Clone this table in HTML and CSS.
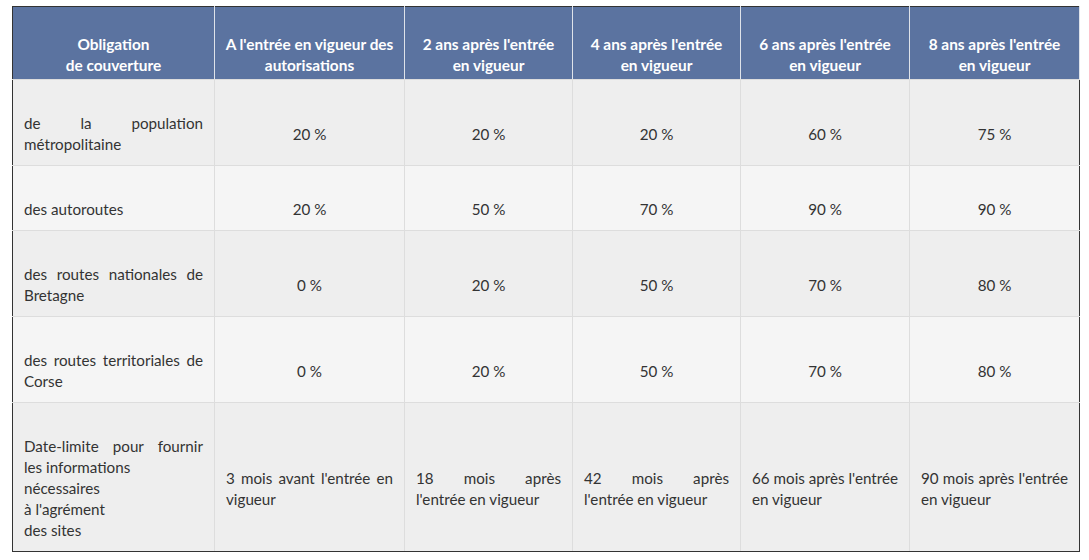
FILE: index.html
```html
<!DOCTYPE html>
<html lang="fr">
<head>
<meta charset="utf-8">
<title>Obligations de couverture</title>
<link rel="stylesheet" href="styles.css">
</head>
<body>
<table class="cov">
  <colgroup>
    <col class="c1"><col class="c2"><col class="c3"><col class="c4"><col class="c5"><col class="c6">
  </colgroup>
  <thead>
    <tr>
      <th>Obligation<br>de couverture</th>
      <th>A l'entrée en vigueur des autorisations</th>
      <th>2 ans après l'entrée en vigueur</th>
      <th>4 ans après l'entrée en vigueur</th>
      <th>6 ans après l'entrée en vigueur</th>
      <th>8 ans après l'entrée en vigueur</th>
    </tr>
  </thead>
  <tbody>
    <tr class="odd">
      <td class="lbl">de la population métropolitaine</td>
      <td class="num">20 %</td><td class="num">20 %</td><td class="num">20 %</td><td class="num">60 %</td><td class="num">75 %</td>
    </tr>
    <tr class="even">
      <td class="lbl">des autoroutes</td>
      <td class="num">20 %</td><td class="num">50 %</td><td class="num">70 %</td><td class="num">90 %</td><td class="num">90 %</td>
    </tr>
    <tr class="odd">
      <td class="lbl">des routes nationales de Bretagne</td>
      <td class="num">0 %</td><td class="num">20 %</td><td class="num">50 %</td><td class="num">70 %</td><td class="num">80 %</td>
    </tr>
    <tr class="even">
      <td class="lbl">des routes territoriales de Corse</td>
      <td class="num">0 %</td><td class="num">20 %</td><td class="num">50 %</td><td class="num">70 %</td><td class="num">80 %</td>
    </tr>
    <tr class="odd last">
      <td class="lbl">Date-limite pour fournir les informations<br>nécessaires<br>à l'agrément<br>des sites</td>
      <td class="txt">3 mois avant l'entrée en vigueur</td>
      <td class="txt">18 mois après l'entrée en vigueur</td>
      <td class="txt">42 mois après l'entrée en vigueur</td>
      <td class="txt">66 mois après l'entrée en vigueur</td>
      <td class="txt">90 mois après l'entrée en vigueur</td>
    </tr>
  </tbody>
</table>
</body>
</html>
```

FILE: styles.css
```css
html, body {
  margin: 0;
  padding: 0;
  background: #ffffff;
}
body {
  padding: 6px 0 0 12px;
  font-family: "Lato", "Liberation Sans", sans-serif;
  font-size: 15.2px;
  color: #333333;
}
.cov {
  border-collapse: collapse;
  table-layout: fixed;
  width: 1067px;
}
.c1 { width: 202px; }
.c2 { width: 190px; }
.c3 { width: 168px; }
.c4 { width: 168px; }
.c5 { width: 169px; }
.c6 { width: 170px; }

.cov th {
  background: #5b73a0;
  color: #ffffff;
  font-size: 15.4px;
  font-weight: 700;
  line-height: 21px;
  text-align: center;
  vertical-align: middle;
  padding: 27px 10px 3px;
  border: 1px solid #dfe3ea;
  border-top: 1px solid #333333;
  border-bottom: 1px solid #dddddd;
}
.cov th:first-child {
  border-left: 1px solid #333333;
}
.cov td {
  line-height: 21px;
  padding: 33px 11px 10px;
  vertical-align: middle;
  border: 1px solid #dddddd;
}
.cov td:first-child {
  border-left: 1px solid #333333;
}
.cov td:last-child {
  border-right: 1px solid #333333;
}
.cov .last td {
  border-bottom: 1px solid #333333;
}
.odd td { background: #eeeeee; }
.even td { background: #f5f5f5; }
.lbl {
  text-align: justify;
}
.num {
  text-align: center;
}
.txt {
  text-align: justify;
}
```
